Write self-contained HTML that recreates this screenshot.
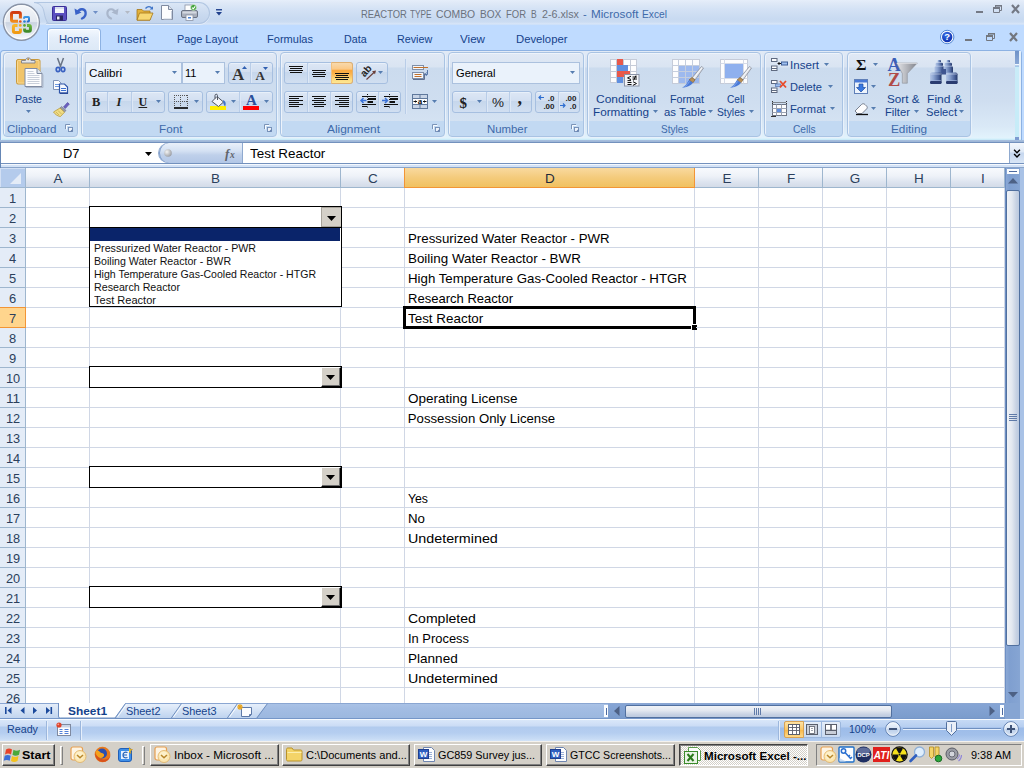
<!DOCTYPE html>
<html><head><meta charset="utf-8"><title>Microsoft Excel</title>
<style>
*{box-sizing:border-box;margin:0;padding:0}
html,body{width:1024px;height:768px;overflow:hidden;background:#bfdbff;font-family:"Liberation Sans",sans-serif;font-size:12px;color:#15428b}
body{position:relative}
div,span,i,b{position:absolute;display:block}
span{white-space:pre;font-style:normal}
i{font-style:normal}
svg{position:absolute;display:block;overflow:visible}
/* title */
#title{left:0;top:0;width:1024px;height:25px;background:linear-gradient(#e6eefa 0,#dfe9f7 3px,#d4e2f5 9px,#c8daf1 19px,#cbdcf2 22px,#d9e6f8 24px,#c4dcfa 25px)}
#qat{left:46px;top:2px;width:164px;height:22px;border-radius:0 11px 11px 0;background:linear-gradient(#dbe6f5,#c9d9ef 60%,#c2d4ec);border:1px solid #b1c6e2;border-left:none;box-shadow:0 1px 0 #e6eefa}
#tabs{left:0;top:25px;width:1024px;height:25px;background:#bfdbff}
#hometab{left:47px;top:28px;width:54px;height:23px;background:linear-gradient(#f3f8fe,#e4eefa 40%,#dce8f6);border:1px solid #8db2e3;border-bottom:none;border-radius:4px 4px 0 0;box-shadow:inset 1px 1px 0 #fff,inset -1px 0 0 #fff}
/* ribbon */
#ribbon{left:0;top:50px;width:1022px;height:90px;border:1px solid #8db2e3;border-bottom:none;border-radius:4px 4px 0 0;background:linear-gradient(#e1eaf6 0,#d8e3f2 16px,#c9d9ee 17px,#cfdef0 50px,#dae9f7 76px,#e2f3fc 87px,#d2f0fb 88px,#c4e6f6 89px,#b4d0ea 90px);box-shadow:inset 1px 0 0 #e4effb}
#ribbot{left:0;top:140px;width:1024px;height:2px;background:linear-gradient(#a9c0df,#9cb4d6)}
.grp{border:1px solid #a9c3e3;border-radius:4px;background:linear-gradient(#e0e9f5 0,#d9e4f2 14px,#cbdbee 15px,#cfdef0 50px,#d4e2f2 68px,#c2d9f2 68px,#c2d9f2 100%);box-shadow:inset 1px 1px 0 #edf3fb,1px 1px 0 #e8f1fb}
.bg{border:1px solid #a6bfe0;border-radius:3px;background:linear-gradient(#dde7f5 0,#d2dff1 45%,#c6d7ec 46%,#d1dff1 100%);box-shadow:inset 0 1px 0 #e8f0fa}
.sep{width:1px;background:#b9cde8;box-shadow:1px 0 0 #dde8f6}
.inp{border:1px solid #abc1de;background:#eaf2fb}
.on{background:linear-gradient(#f8d9ac 0,#fbc987 30%,#fba73c 38%,#fbb550 55%,#fdd87c 80%,#fee892 100%);border:1px solid #e0b070;border-left-color:#f0c080}
/* formula bar */
#fbar{left:0;top:142px;width:1024px;height:26px;background:#fff}
/* grid */
#grid{left:0;top:168px;width:1024px;height:535px;background:#fff;overflow:hidden}
.corner{left:0;top:0;width:26px;height:20px;background:#b4cbec;border-right:1px solid #9eb6ce;border-bottom:1px solid #9eb6ce;box-shadow:inset 1px 1px 0 #d3e0f4}
.corner i{right:4px;bottom:3px;width:0;height:0;border-left:11px solid transparent;border-bottom:11px solid #e4ecf7}
.ch{top:0;height:20px;background:linear-gradient(#f8fafd 0,#eef2f8 8px,#dde4ef 14px,#d3dbe8 19px);border-right:1px solid #9eb6ce;border-bottom:1px solid #9eb6ce}
.ch.sel{background:linear-gradient(#f9d99f,#f4cb7c 50%,#f1c15f);border-bottom:1px solid #f29536;border-right-color:#f29536;box-shadow:-1px 0 0 #f29536}
.rh{left:0;width:26px;height:20px;background:#e4ecf7;border-right:1px solid #9eb6ce;border-bottom:1px solid #9eb6ce}
.rh.sel{background:#ffd58d;border-right:1px solid #f29536;border-bottom-color:#f29536;box-shadow:0 -1px 0 #f29536}
.vl{top:20px;width:1px;height:515px;background:#d0d7e5}
.hl{left:26px;width:979px;height:1px;background:#d0d7e5}
.combo{left:89px;width:253px;height:22px;background:#fff;border:1px solid #000}
.cbtn{left:231px;top:0;width:20px;height:20px;background:#d4d0c8}
.cbtn.up{border-left:1px solid #fff;border-top:1px solid #fff;border-right:1px solid #000;border-bottom:1px solid #000;box-shadow:inset -1px -1px 0 #6a6a6a}
.cbtn.dn{border:1px solid #a8a49c;border-right:none}
.ddl{left:89px;top:59px;width:253px;height:80px;background:#fff;border:1px solid #000}
.ddl .hi{left:0;top:0;width:250px;height:13px;background:#0a246a}
/* bottom */
#sheetbar{left:0;top:703px;width:1024px;height:16px;background:linear-gradient(#a9c2e6 0,#a3bde3 4px,#9bb7df 15px);border-top:1px solid #8aa6d2;border-bottom:1px solid #7596c8}
#status{left:0;top:719px;width:1024px;height:22px;background:linear-gradient(#f6faff 0,#f6faff 1px,#d9e7f9 1px,#cbdcf5 7px,#b1cbee 8px,#b5cef0 14px,#c8dcf5 20px,#d2e3f8 22px)}
#taskbar{left:0;top:741px;width:1024px;height:27px;background:#d4d0c8;border-top:1px solid #f4f2ee}
.tb{top:744px;height:22px;background:#d4d0c8;border:1px solid;border-color:#fff #404040 #404040 #fff;box-shadow:inset -1px -1px 0 #808080}
.tb.dn{border-color:#404040 #fff #fff #404040;box-shadow:inset 1px 1px 0 #808080;background:#fff;background-image:repeating-conic-gradient(#d4d0c8 0 25%,#fff 0 50%);background-size:2px 2px}
.tsep{top:745px;width:2px;height:20px;border-left:1px solid #808080;border-right:1px solid #fff}
.tgrip{top:746px;width:3px;height:18px;border:1px solid;border-color:#fff #808080 #808080 #fff}

</style></head>
<body>

<div id="title"></div><div id="tabs"></div>
<div id="qat"></div>
<div style="left:360.6px;top:9px;height:12px;white-space:nowrap;font-size:0;line-height:0"><span style="position:relative;display:inline-block;width:49.2px;font-size:11.5px;line-height:11.5px;transform:scaleX(0.819);transform-origin:0 0;color:#6b727d;">REACTOR</span> <span style="position:relative;display:inline-block;width:26.6px;font-size:11.5px;line-height:11.5px;transform:scaleX(0.719);transform-origin:0 0;color:#6b727d;">TYPE</span> <span style="position:relative;display:inline-block;width:43.8px;font-size:11.5px;line-height:11.5px;transform:scaleX(0.902);transform-origin:0 0;color:#6b727d;">COMBO</span> <span style="position:relative;display:inline-block;width:25.8px;font-size:11.5px;line-height:11.5px;transform:scaleX(0.877);transform-origin:0 0;color:#6b727d;">BOX</span> <span style="position:relative;display:inline-block;width:25.0px;font-size:11.5px;line-height:11.5px;transform:scaleX(0.824);transform-origin:0 0;color:#6b727d;">FOR</span> <span style="position:relative;display:inline-block;width:10.7px;font-size:11.5px;line-height:11.5px;transform:scaleX(0.743);transform-origin:0 0;color:#6b727d;">B</span> <span style="position:relative;display:inline-block;width:41.6px;font-size:11.5px;line-height:11.5px;transform:scaleX(0.931);transform-origin:0 0;color:#6b727d;">2-6.xlsx</span> <span style="position:relative;display:inline-block;width:7.6px;font-size:11.5px;line-height:11.5px;transform:scaleX(0.963);transform-origin:0 0;color:#3e6aaa;">-</span> <span style="position:relative;display:inline-block;width:51.5px;font-size:11.5px;line-height:11.5px;transform:scaleX(1.018);transform-origin:0 0;color:#3e6aaa;">Microsoft</span> <span style="position:relative;display:inline-block;width:24.9px;font-size:11.5px;line-height:11.5px;transform:scaleX(0.885);transform-origin:0 0;color:#3e6aaa;">Excel</span></div>
<div id="hometab"></div>
<span style="left:59.0px;top:34px;font-size:11.5px;line-height:11.5px;transform:scaleX(0.978);transform-origin:0 0;color:#15428b;">Home</span>
<span style="left:117.0px;top:34px;font-size:11.5px;line-height:11.5px;transform:scaleX(1.008);transform-origin:0 0;color:#15428b;">Insert</span>
<span style="left:176.5px;top:34px;font-size:11.5px;line-height:11.5px;transform:scaleX(0.944);transform-origin:0 0;color:#15428b;">Page Layout</span>
<span style="left:266.6px;top:34px;font-size:11.5px;line-height:11.5px;transform:scaleX(0.960);transform-origin:0 0;color:#15428b;">Formulas</span>
<span style="left:343.7px;top:34px;font-size:11.5px;line-height:11.5px;transform:scaleX(0.930);transform-origin:0 0;color:#15428b;">Data</span>
<span style="left:396.8px;top:34px;font-size:11.5px;line-height:11.5px;transform:scaleX(0.933);transform-origin:0 0;color:#15428b;">Review</span>
<span style="left:460.0px;top:34px;font-size:11.5px;line-height:11.5px;transform:scaleX(1.011);transform-origin:0 0;color:#15428b;">View</span>
<span style="left:515.8px;top:34px;font-size:11.5px;line-height:11.5px;transform:scaleX(0.982);transform-origin:0 0;color:#15428b;">Developer</span>
<svg style="left:0;top:4px" width="1024" height="12" viewBox="0 0 1024 12"><rect x="976" y="7" width="7" height="2" fill="#747985"/><path d="M993.5 3.500h6v5h-6z M995.5 3v-1.500h6v5h-1.500" fill="none" stroke="#747985" stroke-width="1"/><rect x="993" y="3" width="7" height="2" fill="#747985"/><rect x="995" y="1" width="7" height="1.600" fill="#747985"/><path d="M1012 1l7 8M1019 1l-7 8" stroke="#747985" stroke-width="2.200" fill="none"/></svg>
<svg style="left:0;top:32px" width="1024" height="12" viewBox="0 0 1024 12"><rect x="965" y="7" width="7" height="2" fill="#73777f"/><path d="M986.5 3.500h6v5h-6z M988.5 3v-1.500h6v5h-1.500" fill="none" stroke="#73777f" stroke-width="1"/><rect x="986" y="3" width="7" height="2" fill="#73777f"/><rect x="988" y="1" width="7" height="1.600" fill="#73777f"/><path d="M1010 1l7 8M1017 1l-7 8" stroke="#73777f" stroke-width="2.200" fill="none"/></svg>
<svg style="left:940px;top:30px" width="15" height="15" viewBox="0 0 15 15"><defs><radialGradient id="hg" cx="40%" cy="30%" r="75%"><stop offset="0" stop-color="#3a72ea"/><stop offset="1" stop-color="#0a2aa8"/></radialGradient></defs><circle cx="7.200" cy="7" r="6.700" fill="#fff" stroke="#3f7ad0" stroke-width=".9"/><circle cx="7.200" cy="7" r="5.200" fill="url(#hg)"/><text x="7.200" y="10.300" font-family="Liberation Sans,sans-serif" font-size="9.500" font-weight="bold" fill="#fff" text-anchor="middle">?</text></svg>
<svg style="left:3px;top:3px" width="38" height="38" viewBox="0 0 38 38">
<defs><linearGradient id="ob" x1="0" y1="0" x2="0" y2="1"><stop offset="0" stop-color="#f6f8fb"/><stop offset=".5" stop-color="#e2e7ef"/><stop offset=".51" stop-color="#cbd3e0"/><stop offset=".8" stop-color="#e4e9f1"/><stop offset="1" stop-color="#fbfcfe"/></linearGradient>
<linearGradient id="lr" x1="0" y1="0" x2="0" y2="1"><stop offset="0" stop-color="#d03a12"/><stop offset="1" stop-color="#f08a1c"/></linearGradient>
<linearGradient id="ly" x1="0" y1="0" x2="0" y2="1"><stop offset="0" stop-color="#f9b82a"/><stop offset="1" stop-color="#f09a14"/></linearGradient>
<linearGradient id="lg" x1="0" y1="0" x2="0" y2="1"><stop offset="0" stop-color="#6ab43a"/><stop offset="1" stop-color="#3f8a2a"/></linearGradient>
<linearGradient id="lb" x1="0" y1="0" x2="0" y2="1"><stop offset="0" stop-color="#3a9ae8"/><stop offset="1" stop-color="#2a6ac8"/></linearGradient></defs>
<circle cx="18.400" cy="19.200" r="18" fill="url(#ob)" stroke="#8993a6" stroke-width="1.400"/>
<circle cx="18.400" cy="19.200" r="16.600" fill="none" stroke="#fff" stroke-width="1" opacity=".85"/>
<g fill="none" stroke-linejoin="round" stroke-linecap="butt">
<path d="M17.400 15.500v-4.600c0-1-.5-1.500-1.500-1.500h-5.900c-1 0-1.500.5-1.500 1.500v5.900c0 1 .5 1.500 1.500 1.500h5" stroke="url(#lr)" stroke-width="3"/>
<path d="M21.100 15.700v-1c0-.4.300-.7.700-.7h3.500c.4 0 .7.300.7.700v3.100c0 .4-.3.700-.7.700h-1.600" stroke="url(#lb)" stroke-width="2"/>
<path d="M14.500 22.500h-2.600c-1 0-1.500.5-1.500 1.500v4c0 1 .5 1.500 1.500 1.500h4c1 0 1.500-.5 1.500-1.500v-2.500" stroke="url(#ly)" stroke-width="3"/>
<path d="M24 22.500h1.900c1 0 1.500.5 1.500 1.500v2.800c0 1-.5 1.500-1.500 1.500h-2.800c-1 0-1.500-.5-1.500-1.500v-1.300" stroke="url(#lg)" stroke-width="3"/>
</g>
<circle cx="17.300" cy="18.500" r="1.350" fill="#e4521c"/><circle cx="21.500" cy="18.500" r="1.350" fill="#2f7fd8"/><circle cx="17.300" cy="22.400" r="1.350" fill="#f4a820"/><circle cx="21.500" cy="22.400" r="1.350" fill="#5aa832"/>
</svg>
<svg style="left:30px;top:0" width="20" height="26" viewBox="0 0 20 26"><defs><linearGradient id="qg" x1="0" y1="2" x2="0" y2="24" gradientUnits="userSpaceOnUse"><stop offset="0" stop-color="#dbe6f5"/><stop offset=".6" stop-color="#c9d9ef"/><stop offset="1" stop-color="#c2d4ec"/></linearGradient></defs><path d="M4 2.500c6 .500 9 4 10 9.500s2 8.500 4 11.500H16V2.500z" fill="url(#qg)"/><path d="M16 2.500H4c6 .500 9 4 10 9.500s2 9 4.500 11.500" fill="none" stroke="#b1c6e2" stroke-width="1"/></svg>
<svg style="left:52px;top:6px" width="15" height="15" viewBox="0 0 15 15"><rect x=".5" y=".5" width="14" height="14" rx="1" fill="#5a4fc0" stroke="#3a2f98"/><rect x="3" y="1" width="9" height="6" fill="#f4f6fb"/><rect x="3" y="1" width="9" height="2" fill="#d8def0"/><rect x="4" y="9.5" width="7" height="5" fill="#2a2660"/><rect x="5" y="10.5" width="2.5" height="3" fill="#e8eaf6"/></svg>
<svg style="left:74px;top:6px" width="14" height="14" viewBox="0 0 14 14"><path d="M3.5 6.5C5 2.5 10.5 2 11.5 6c.6 3-1.2 5.500-3.500 6.500" fill="none" stroke="#3a62c8" stroke-width="2.400" stroke-linecap="round"/><path d="M.5 2.500l1 6.500 6-2.500z" fill="#3a62c8"/></svg>
<svg style="left:93px;top:11px" width="5" height="3" viewBox="0 0 5 3"><path d="M0 0H5L2.5 3Z" fill="#6f8fc6"/></svg>
<svg style="left:105px;top:6px" width="14" height="14" viewBox="0 0 14 14"><path d="M10.500 6.500C9 2.500 3.500 2 2.500 6c-.6 3 1.200 5.500 3.500 6.500" fill="none" stroke="#a9b6cb" stroke-width="2.200" stroke-linecap="round"/><path d="M13.500 2.500l-1 6.500-6-2.500z" fill="#a9b6cb"/></svg>
<svg style="left:125px;top:11px" width="5" height="3" viewBox="0 0 5 3"><path d="M0 0H5L2.5 3Z" fill="#b3b9c4"/></svg>
<svg style="left:136px;top:5px" width="18" height="16" viewBox="0 0 18 16"><path d="M1 4.500h5l1.500 1.500h6.500v9h-13z" fill="#e3b23c" stroke="#a5761a" stroke-width=".8"/><path d="M3.500 8h13.500l-3 7.200h-13z" fill="#f7d873" stroke="#a5761a" stroke-width=".8"/><path d="M9.500 3.500c2-2.500 5-2.500 6.500 0" fill="none" stroke="#3f74c8" stroke-width="1.300"/><path d="M17 1.200v3.300h-3.300z" fill="#3f74c8"/></svg>
<svg style="left:161px;top:5px" width="12" height="15" viewBox="0 0 12 15"><path d="M.5.500h7l4 4v10h-11z" fill="#fdfdfe" stroke="#7f8aa0"/><path d="M7.500.500v4h4" fill="#dfe5ee" stroke="#7f8aa0"/><path d="M10.500 6v8h-8" fill="none" stroke="#c9d2e0"/></svg>
<svg style="left:181px;top:4px" width="17" height="17" viewBox="0 0 17 17"><rect x="4" y="1" width="8" height="6" fill="#fdfdfe" stroke="#8a93a6" stroke-width=".8"/><rect x=".5" y="6.500" width="16" height="7" rx="1.500" fill="#aab0bc" stroke="#6c7484"/><rect x="1.500" y="7.500" width="14" height="2" fill="#d4d8e0"/><rect x="5" y="11" width="7" height="5.500" fill="#fdfdfe" stroke="#8a93a6" stroke-width=".8"/><rect x="7" y="13" width="3" height="1.500" fill="#4a84d8"/><circle cx="12.500" cy="3.500" r="3" fill="#3fa23a" stroke="#e8f4e6" stroke-width=".6"/><path d="M11 3.500l1.200 1.300 2-2.500" stroke="#fff" stroke-width="1.100" fill="none"/></svg>
<svg style="left:215.500px;top:8.500px" width="6" height="7" viewBox="0 0 7 8"><rect x="0" y="0" width="7" height="1.600" fill="#1f3f8c"/><path d="M0 3.500h7l-3.500 4z" fill="#1f3f8c"/></svg>
<div id="ribbon"></div><div id="ribbot"></div>
<div style="left:1015px;top:51px;width:4px;height:89px;background:linear-gradient(#6f92c8 0,#8aa8d6 13px,#eef8ff 13px,#eef8ff 14px,#7fa3d8 15px,#c9ecf8 16px,#c6ecf8 100%)"></div>
<div style="left:1019px;top:51px;width:2px;height:88px;background:#e4f0fb"></div>
<div style="left:1015px;top:137px;width:4px;height:3px;background:#7c9bd0"></div>
<div class="grp" style="left:3px;top:52px;width:75px;height:85px;"></div>
<span style="left:7.0px;top:124px;font-size:11.5px;line-height:11.5px;transform:scaleX(1.005);transform-origin:0 0;color:#3e6aaa;">Clipboard</span>
<svg style="left:65px;top:124px" width="9" height="9" viewBox="0 0 9 9"><path d="M.5 5V.5H5" fill="none" stroke="#7b94b8"/><path d="M1.500 5.500V1.500H5.500" fill="none" stroke="#fff" opacity=".9"/><rect x="3.500" y="3.500" width="4" height="4" fill="#eef3fa" stroke="#6f8ab3" stroke-width=".9"/><path d="M5 7.500h2.500V5z" fill="#5f7daa"/></svg>
<svg style="left:16px;top:56px" width="28" height="32" viewBox="0 0 28 32">
<rect x=".500" y="3.500" width="23.500" height="24.500" rx="1.500" fill="#f1c469" stroke="#c9993c"/>
<rect x="1.500" y="4.500" width="21.500" height="22.500" rx="1" fill="none" stroke="#f8d993" stroke-width="1"/>
<path d="M5.500 7v-2.500h4c0-3.500 5.500-3.500 5.500 0h4V7z" fill="#e4e5e8" stroke="#7d7f88" stroke-width=".9"/>
<circle cx="12.200" cy="3.200" r="1" fill="#b98a3a"/>
<path d="M9 12.500h12l5 5v13h-17z" fill="#fdfdfe" stroke="#7f8ba2"/>
<path d="M21 12.500v5h5" fill="#dfe5ee" stroke="#7f8ba2"/>
<path d="M11.500 15.500h6M11.500 17.500h7M11.500 19.500h12M11.500 21.500h12M11.500 23.500h12M11.500 25.500h12M11.500 27.500h12" stroke="#c9cfda" stroke-width="1"/>
<path d="M10 31.500h17v-13" fill="none" stroke="#aeb9cb"/>
</svg>
<span style="left:15.0px;top:94px;font-size:11.5px;line-height:11.5px;transform:scaleX(0.918);transform-origin:0 0;color:#15428b;">Paste</span>
<svg style="left:26px;top:110px" width="5" height="3" viewBox="0 0 5 3"><path d="M0 0H5L2.5 3Z" fill="#567db0"/></svg>
<svg style="left:55px;top:58px" width="11" height="15" viewBox="0 0 11 15"><path d="M2.500 0l3.500 9.500M8.500 0l-3.500 9.500" stroke="#6a7484" stroke-width="1.500" fill="none"/><ellipse cx="3" cy="11.500" rx="1.800" ry="2.200" fill="#c9d8f4" stroke="#3a62c0" stroke-width="1.700"/><ellipse cx="8" cy="11.500" rx="1.800" ry="2.200" fill="#c9d8f4" stroke="#3a62c0" stroke-width="1.700"/></svg>
<svg style="left:53px;top:80px" width="16" height="14" viewBox="0 0 16 14"><path d="M.500 .500h5l2.500 2.500v6.500h-7.500z" fill="#fdfdfe" stroke="#7f93b8"/><path d="M2 4.500h4M2 6.500h4" stroke="#6f9ae0"/><path d="M6.500 4h5l3 3v6h-8z" fill="#f4f8fd" stroke="#2f55a8" stroke-width="1.200"/><path d="M8 8.500h5M8 10.500h5" stroke="#3a6fd0" stroke-width="1.200"/><path d="M7 13.300h8" stroke="#2a4a98" stroke-width="1.400"/></svg>
<svg style="left:53px;top:101px" width="17" height="16" viewBox="0 0 17 16"><path d="M10.500 6l4-4.500 1.800 1.600-4 4.500z" fill="#6a5fc0" stroke="#4a3f98" stroke-width=".6"/><path d="M8.500 5.500l4.500 4-1.500 1.500-4.500-4z" fill="#9a9ca8" stroke="#6c6f7c" stroke-width=".6"/><path d="M7 7l4.500 4.200-4 4.300c-2.500 0-5.500-2.200-7-4.500z" fill="#f0dc84" stroke="#b89a3c" stroke-width=".8"/><path d="M3 11l3 3M5 9.500l3.500 3.500" stroke="#c8ae50" stroke-width=".8"/></svg>
<div class="grp" style="left:81px;top:52px;width:196px;height:85px;"></div>
<span style="left:158.6px;top:124px;font-size:11.5px;line-height:11.5px;transform:scaleX(1.017);transform-origin:0 0;color:#3e6aaa;">Font</span>
<svg style="left:264px;top:124px" width="9" height="9" viewBox="0 0 9 9"><path d="M.5 5V.5H5" fill="none" stroke="#7b94b8"/><path d="M1.500 5.500V1.500H5.500" fill="none" stroke="#fff" opacity=".9"/><rect x="3.500" y="3.500" width="4" height="4" fill="#eef3fa" stroke="#6f8ab3" stroke-width=".9"/><path d="M5 7.500h2.500V5z" fill="#5f7daa"/></svg>
<div class="inp" style="left:85px;top:62px;width:97px;height:22px;"></div>
<span style="left:88.5px;top:68px;font-size:11.5px;line-height:11.5px;transform:scaleX(1.012);transform-origin:0 0;color:#000;">Calibri</span>
<svg style="left:172px;top:71px" width="5" height="3" viewBox="0 0 5 3"><path d="M0 0H5L2.5 3Z" fill="#567db0"/></svg>
<div class="inp" style="left:182px;top:62px;width:43px;height:22px;"></div>
<span style="left:185.0px;top:68px;font-size:11.5px;line-height:11.5px;transform:scaleX(0.962);transform-origin:0 0;color:#000;">11</span>
<svg style="left:215px;top:71px" width="5" height="3" viewBox="0 0 5 3"><path d="M0 0H5L2.5 3Z" fill="#567db0"/></svg>
<div class="bg" style="left:228px;top:62px;width:45px;height:22px;"></div>
<div class="sep" style="left:250px;top:63px;width:1px;height:20px;"></div>
<span style="left:232.0px;top:66px;font-size:17px;line-height:17px;color:#333;font-weight:bold;font-family:'Liberation Serif',serif;">A</span>
<span style="left:255.5px;top:69px;font-size:13px;line-height:13px;color:#333;font-weight:bold;font-family:'Liberation Serif',serif;">A</span>
<svg style="left:242px;top:66px" width="5" height="3" viewBox="0 0 5 3"><path d="M0 3h5L2.500 0z" fill="#2f5fb0"/></svg>
<svg style="left:263px;top:67px" width="5" height="3" viewBox="0 0 5 3"><path d="M0 0H5L2.5 3Z" fill="#2f5fb0"/></svg>
<div class="bg" style="left:85px;top:91px;width:80px;height:22px;"></div>
<div class="sep" style="left:107px;top:92px;width:1px;height:20px;"></div>
<div class="sep" style="left:131px;top:92px;width:1px;height:20px;"></div>
<span style="left:92.0px;top:96px;font-size:12.5px;line-height:12.5px;color:#222;font-weight:bold;font-family:'Liberation Serif',serif;">B</span>
<span style="left:116.5px;top:96px;font-size:12.5px;line-height:12.5px;color:#222;font-weight:bold;font-style:italic;font-family:'Liberation Serif',serif;">I</span>
<span style="left:138.5px;top:96px;font-size:12px;line-height:12px;color:#222;font-weight:bold;font-family:'Liberation Serif',serif;text-decoration:underline;">U</span>
<svg style="left:156px;top:100px" width="5" height="3" viewBox="0 0 5 3"><path d="M0 0H5L2.5 3Z" fill="#567db0"/></svg>
<div class="bg" style="left:168px;top:91px;width:35px;height:22px;"></div>
<svg style="left:174px;top:95px" width="14" height="14" viewBox="0 0 14 14"><path d="M0 .500h14M0 6.500h14M.500 0v12M6.500 0v12M13.500 0v12" stroke="#555" stroke-dasharray="1 1" fill="none"/><path d="M0 13h14" stroke="#000" stroke-width="1.600"/></svg>
<svg style="left:194px;top:100px" width="5" height="3" viewBox="0 0 5 3"><path d="M0 0H5L2.5 3Z" fill="#567db0"/></svg>
<div class="bg" style="left:206px;top:91px;width:67px;height:22px;"></div>
<div class="sep" style="left:239px;top:92px;width:1px;height:20px;"></div>
<svg style="left:210px;top:94px" width="17" height="16" viewBox="0 0 17 16"><rect x="0" y="12" width="16" height="4" fill="#ffef00"/><path d="M7 2.500l6.500 5.500-5 4.500L2 7.500z" fill="#f4f6fa" stroke="#4f5562" stroke-width="1"/><path d="M7.500 6V1.500c0-1.700-2.500-1.700-2.500 0v3" fill="none" stroke="#4f5562" stroke-width="1"/><path d="M13 6c2.500 1 3.500 3.500 2 6.500-1.200-1.500-2-3-2-6.500z" fill="#3f74c8"/></svg>
<svg style="left:231px;top:100px" width="5" height="3" viewBox="0 0 5 3"><path d="M0 0H5L2.5 3Z" fill="#567db0"/></svg>
<span style="left:246.0px;top:93px;font-size:15px;line-height:15px;color:#2a4f9a;font-weight:bold;font-family:'Liberation Serif',serif;">A</span>
<div style="left:243px;top:106px;width:16px;height:4px;background:#f00"></div>
<svg style="left:264px;top:100px" width="5" height="3" viewBox="0 0 5 3"><path d="M0 0H5L2.5 3Z" fill="#567db0"/></svg>
<div class="grp" style="left:280px;top:52px;width:165px;height:85px;"></div>
<span style="left:327.0px;top:124px;font-size:11.5px;line-height:11.5px;transform:scaleX(1.036);transform-origin:0 0;color:#3e6aaa;">Alignment</span>
<svg style="left:432px;top:124px" width="9" height="9" viewBox="0 0 9 9"><path d="M.5 5V.5H5" fill="none" stroke="#7b94b8"/><path d="M1.500 5.500V1.500H5.500" fill="none" stroke="#fff" opacity=".9"/><rect x="3.500" y="3.500" width="4" height="4" fill="#eef3fa" stroke="#6f8ab3" stroke-width=".9"/><path d="M5 7.500h2.500V5z" fill="#5f7daa"/></svg>
<div class="bg" style="left:284px;top:62px;width:69px;height:22px;"></div>
<div class="on" style="left:331px;top:62px;width:22px;height:22px;border-radius:0 3px 3px 0"></div>
<div class="sep" style="left:307px;top:63px;width:1px;height:20px;"></div>
<svg style="left:289px;top:66px" width="14" height="14" viewBox="0 0 14 14"><rect x="0" y="0" width="14" height="1" fill="#111"/><rect x="1" y="2" width="12" height="1" fill="#111"/><rect x="0" y="4" width="14" height="1" fill="#111"/><rect x="1" y="6" width="12" height="1" fill="#111"/></svg>
<svg style="left:312px;top:70px" width="14" height="14" viewBox="0 0 14 14"><rect x="0" y="0" width="14" height="1" fill="#111"/><rect x="1" y="2" width="12" height="1" fill="#111"/><rect x="0" y="4" width="14" height="1" fill="#111"/><rect x="1" y="6" width="12" height="1" fill="#111"/></svg>
<svg style="left:335px;top:73px" width="14" height="14" viewBox="0 0 14 14"><rect x="0" y="0" width="14" height="1" fill="#111"/><rect x="1" y="2" width="12" height="1" fill="#111"/><rect x="0" y="4" width="14" height="1" fill="#111"/><rect x="1" y="6" width="12" height="1" fill="#111"/></svg>
<div class="bg" style="left:356px;top:62px;width:32px;height:22px;"></div>
<svg style="left:360px;top:64px" width="18" height="18" viewBox="0 0 18 18"><text x="0" y="0" font-family="Liberation Sans,sans-serif" font-size="10" font-weight="bold" fill="#222" transform="translate(4.500 13.500) rotate(-48)">ab</text><path d="M6.500 15.500l8-7.500" stroke="#6a3f3a" stroke-width="1.100"/><path d="M16 6.500l-4 .800 3 3z" fill="#6a3f3a"/></svg>
<svg style="left:378px;top:71px" width="5" height="3" viewBox="0 0 5 3"><path d="M0 0H5L2.5 3Z" fill="#567db0"/></svg>
<div class="bg" style="left:284px;top:91px;width:69px;height:22px;"></div>
<div class="sep" style="left:307px;top:92px;width:1px;height:20px;"></div>
<div class="sep" style="left:330px;top:92px;width:1px;height:20px;"></div>
<svg style="left:289px;top:96px" width="14" height="14" viewBox="0 0 14 14"><rect x="0" y="0" width="14" height="1" fill="#111"/><rect x="0" y="2" width="10" height="1" fill="#111"/><rect x="0" y="4" width="14" height="1" fill="#111"/><rect x="0" y="6" width="10" height="1" fill="#111"/><rect x="0" y="8" width="14" height="1" fill="#111"/><rect x="0" y="10" width="10" height="1" fill="#111"/></svg>
<svg style="left:312px;top:96px" width="14" height="14" viewBox="0 0 14 14"><rect x="0" y="0" width="14" height="1" fill="#111"/><rect x="2" y="2" width="10" height="1" fill="#111"/><rect x="0" y="4" width="14" height="1" fill="#111"/><rect x="2" y="6" width="10" height="1" fill="#111"/><rect x="0" y="8" width="14" height="1" fill="#111"/><rect x="2" y="10" width="10" height="1" fill="#111"/></svg>
<svg style="left:335px;top:96px" width="14" height="14" viewBox="0 0 14 14"><rect x="0" y="0" width="14" height="1" fill="#111"/><rect x="4" y="2" width="10" height="1" fill="#111"/><rect x="0" y="4" width="14" height="1" fill="#111"/><rect x="4" y="6" width="10" height="1" fill="#111"/><rect x="0" y="8" width="14" height="1" fill="#111"/><rect x="4" y="10" width="10" height="1" fill="#111"/></svg>
<div class="bg" style="left:356px;top:91px;width:45px;height:22px;"></div>
<div class="sep" style="left:378px;top:92px;width:1px;height:20px;"></div>
<svg style="left:360px;top:94px" width="17" height="15" viewBox="0 0 17 15"><path d="M7.500 0v15" stroke="#111" stroke-dasharray="1 1.500"/><rect x="2" y="2" width="14" height="1" fill="#111"/><rect x="8" y="4" width="8" height="2" fill="#111"/><rect x="8" y="7" width="5" height="2" fill="#111"/><rect x="2" y="10" width="14" height="1" fill="#111"/><rect x="2" y="12" width="5" height="1" fill="#111"/><path d="M6.500 6.500H1M3.500 4L1 6.500 3.500 9" stroke="#3a72d8" stroke-width="1.500" fill="none"/></svg>
<svg style="left:382px;top:94px" width="17" height="15" viewBox="0 0 17 15"><path d="M7.500 0v15" stroke="#111" stroke-dasharray="1 1.500"/><rect x="2" y="2" width="14" height="1" fill="#111"/><rect x="8" y="4" width="8" height="2" fill="#111"/><rect x="8" y="7" width="5" height="2" fill="#111"/><rect x="2" y="10" width="14" height="1" fill="#111"/><rect x="2" y="12" width="5" height="1" fill="#111"/><path d="M0 6.500h5.500M3 4L5.500 6.500 3 9" stroke="#3a72d8" stroke-width="1.500" fill="none"/></svg>
<div class="sep" style="left:405px;top:59px;width:1px;height:55px;"></div>
<svg style="left:412px;top:65px" width="17" height="15" viewBox="0 0 17 15"><rect x=".500" y=".500" width="11" height="4" fill="#f4f7fb" stroke="#7f8fa8"/><path d="M1.500 2.500H16" stroke="#c0702c" stroke-width="1"/><rect x=".500" y="7.500" width="11" height="6" fill="#f4f7fb" stroke="#7f8fa8"/><path d="M1 14.500h11.500v-6" fill="none" stroke="#5f7090" stroke-width="1"/><path d="M2.500 9.500h7M2.500 11.500h7" stroke="#c0702c"/><path d="M15.500 5v4.500h-2.500M14.500 7.500L13 9.500 15 10.500" stroke="#5878a8" fill="none"/></svg>
<svg style="left:412px;top:94px" width="16" height="15" viewBox="0 0 16 15"><rect x=".500" y=".500" width="15" height="14" fill="#fdfdfe" stroke="#5f789c"/><rect x="1" y="1" width="14" height="3" fill="#c8d4e6"/><rect x="1" y="11" width="14" height="3" fill="#c8d4e6"/><path d="M.500 4.500h15M.500 10.500h15M8 .500v4M8 10.500v4" stroke="#5f789c"/><text x="8" y="10.300" font-family="Liberation Serif,serif" font-weight="bold" font-size="9" text-anchor="middle" fill="#111">a</text><path d="M1.500 7.500h3.500M11 7.500h3.500M3.500 6.500v2M12.500 6.500v2" stroke="#111"/></svg>
<svg style="left:432px;top:100px" width="5" height="3" viewBox="0 0 5 3"><path d="M0 0H5L2.5 3Z" fill="#567db0"/></svg>
<div class="grp" style="left:448px;top:52px;width:136px;height:85px;"></div>
<span style="left:486.6px;top:124px;font-size:11.5px;line-height:11.5px;transform:scaleX(0.990);transform-origin:0 0;color:#3e6aaa;">Number</span>
<svg style="left:571px;top:124px" width="9" height="9" viewBox="0 0 9 9"><path d="M.5 5V.5H5" fill="none" stroke="#7b94b8"/><path d="M1.500 5.500V1.500H5.500" fill="none" stroke="#fff" opacity=".9"/><rect x="3.500" y="3.500" width="4" height="4" fill="#eef3fa" stroke="#6f8ab3" stroke-width=".9"/><path d="M5 7.500h2.500V5z" fill="#5f7daa"/></svg>
<div class="inp" style="left:452px;top:62px;width:128px;height:22px;"></div>
<span style="left:455.5px;top:68px;font-size:11.5px;line-height:11.5px;transform:scaleX(0.965);transform-origin:0 0;color:#000;">General</span>
<svg style="left:570px;top:71px" width="5" height="3" viewBox="0 0 5 3"><path d="M0 0H5L2.5 3Z" fill="#567db0"/></svg>
<div class="bg" style="left:452px;top:91px;width:80px;height:22px;"></div>
<div class="sep" style="left:486px;top:92px;width:1px;height:20px;"></div>
<div class="sep" style="left:509px;top:92px;width:1px;height:20px;"></div>
<span style="left:459.5px;top:96px;font-size:15px;line-height:15px;color:#222;font-weight:bold;font-family:'Liberation Serif',serif;">$</span>
<svg style="left:477px;top:100px" width="5" height="3" viewBox="0 0 5 3"><path d="M0 0H5L2.5 3Z" fill="#567db0"/></svg>
<span style="left:491.5px;top:96px;font-size:13px;line-height:13px;transform:scaleX(1.038);transform-origin:0 0;color:#222;">%</span>
<span style="left:517.5px;top:89px;font-size:18px;line-height:18px;color:#222;font-weight:bold;font-family:'Liberation Serif',serif;">,</span>
<div class="bg" style="left:535px;top:91px;width:45px;height:22px;"></div>
<div class="sep" style="left:558px;top:92px;width:1px;height:20px;"></div>
<svg style="left:538px;top:94px" width="17" height="16" viewBox="0 0 17 16"><text x="16.500" y="7" font-family="Liberation Sans,sans-serif" font-weight="bold" font-size="8" text-anchor="end" fill="#222">.0</text><text x="16.500" y="14.500" font-family="Liberation Sans,sans-serif" font-weight="bold" font-size="8" text-anchor="end" fill="#222">.00</text><path d="M6 3.500H1M3 1.500L1 3.500 3 5.500" stroke="#2f6fd0" stroke-width="1.200" fill="none"/></svg>
<svg style="left:560px;top:94px" width="17" height="16" viewBox="0 0 17 16"><text x="16.500" y="7" font-family="Liberation Sans,sans-serif" font-weight="bold" font-size="8" text-anchor="end" fill="#222">.00</text><text x="16.500" y="14.500" font-family="Liberation Sans,sans-serif" font-weight="bold" font-size="8" text-anchor="end" fill="#222">.0</text><path d="M0 11.500h5M3 9.500L5 11.500 3 13.500" stroke="#2f6fd0" stroke-width="1.200" fill="none"/></svg>
<div class="grp" style="left:587px;top:52px;width:174px;height:85px;"></div>
<span style="left:660.7px;top:124px;font-size:11.5px;line-height:11.5px;transform:scaleX(0.871);transform-origin:0 0;color:#3e6aaa;">Styles</span>
<svg style="left:610px;top:59px" width="30" height="28" viewBox="0 0 30 28">
<rect x=".500" y=".500" width="26" height="23" fill="#fdfdfe" stroke="#c5cbd8"/>
<path d="M.500 6.500h26M.500 12.500h26M.500 18.500h26M6.500 .500v23M13.500 .500v23M20.500 .500v23" stroke="#c5cbd8"/>
<rect x="7" y="0" width="6" height="6" fill="#e8584a"/><rect x="7" y="6" width="11" height="6" fill="#5f8fe0"/><rect x="7" y="12" width="13" height="6" fill="#e8584a"/><rect x="7" y="18" width="6" height="6" fill="#5f8fe0"/>
<rect x="14.500" y="15.500" width="14.500" height="11.500" fill="#f3f5f9" stroke="#8a93a6"/>
<path d="M21 17.200l-3.500 1.700 3.500 1.700M17.500 21.600h3.500" fill="none" stroke="#111" stroke-width="1"/>
<path d="M22.500 18h4.500M22.500 20h4.500M26 16.500l-2.500 5" fill="none" stroke="#111" stroke-width="1"/>
<path d="M17.500 23.500h4M17.500 25.500h4" fill="none" stroke="#111" stroke-width="1"/>
<path d="M23 22.700l3.500 1.800-3.500 1.800" fill="none" stroke="#111" stroke-width="1"/>
</svg>
<span style="left:595.8px;top:94px;font-size:11.5px;line-height:11.5px;transform:scaleX(1.043);transform-origin:0 0;color:#15428b;">Conditional</span>
<span style="left:593.4px;top:107px;font-size:11.5px;line-height:11.5px;transform:scaleX(1.019);transform-origin:0 0;color:#15428b;">Formatting</span>
<svg style="left:653px;top:110px" width="5" height="3" viewBox="0 0 5 3"><path d="M0 0H5L2.5 3Z" fill="#567db0"/></svg>
<svg style="left:672px;top:59px" width="28" height="25" viewBox="0 0 28 25"><rect x=".500" y=".500" width="27" height="24" fill="#fdfdfe" stroke="#c5cbd8"/><rect x="7" y="6" width="20" height="18" fill="#9db9ee"/><path d="M.500 6.500h27M.500 12.500h27M.500 18.500h27M6.500 .500v24M13.500 .500v24M20.500 .500v24" stroke="#c5cede"/></svg>
<svg style="left:682px;top:66px" width="22" height="22" viewBox="0 0 22 22"><path d="M19.500 .500l2 1.500-8.500 12-3-2.200z" fill="#dfe2e8" stroke="#8a8f9c" stroke-width=".8"/><path d="M20 1.500l-8.500 11" stroke="#fff" stroke-width=".8"/><path d="M10 11.500l3 2.300-2 3-4-2.800z" fill="#b8905a" stroke="#7a5a2a" stroke-width=".6"/><path d="M7 14l4 2.800c-2 3-6.500 4.500-11 5 3.500-2 5-4.500 7-7.800z" fill="#4a7ad8"/><path d="M7.500 15.500c-1.500 2.500-3 4-5 5.500" stroke="#8fb0f0" stroke-width=".8" fill="none"/></svg>
<span style="left:670.0px;top:94px;font-size:11.5px;line-height:11.5px;transform:scaleX(0.934);transform-origin:0 0;color:#15428b;">Format</span>
<span style="left:663.5px;top:107px;font-size:11.5px;line-height:11.5px;transform:scaleX(0.985);transform-origin:0 0;color:#15428b;">as Table</span>
<svg style="left:708px;top:110px" width="5" height="3" viewBox="0 0 5 3"><path d="M0 0H5L2.5 3Z" fill="#567db0"/></svg>
<svg style="left:720px;top:59px" width="28" height="25" viewBox="0 0 28 25"><rect x=".500" y=".500" width="27" height="24" fill="#fdfdfe" stroke="#c5cbd8"/><path d="M.500 4.500h27M.500 19.500h27M4.500 .500v24M23.500 .500v24" stroke="#d5dbe8"/><rect x="5" y="5" width="18" height="14" fill="#8fb0ee"/></svg>
<svg style="left:730px;top:66px" width="22" height="22" viewBox="0 0 22 22"><path d="M19.500 .500l2 1.500-8.500 12-3-2.200z" fill="#dfe2e8" stroke="#8a8f9c" stroke-width=".8"/><path d="M20 1.500l-8.500 11" stroke="#fff" stroke-width=".8"/><path d="M10 11.500l3 2.300-2 3-4-2.800z" fill="#b8905a" stroke="#7a5a2a" stroke-width=".6"/><path d="M7 14l4 2.800c-2 3-6.500 4.500-11 5 3.500-2 5-4.500 7-7.800z" fill="#4a7ad8"/><path d="M7.500 15.500c-1.500 2.500-3 4-5 5.500" stroke="#8fb0f0" stroke-width=".8" fill="none"/></svg>
<span style="left:726.6px;top:94px;font-size:11.5px;line-height:11.5px;transform:scaleX(0.883);transform-origin:0 0;color:#15428b;">Cell</span>
<span style="left:717.3px;top:107px;font-size:11.5px;line-height:11.5px;transform:scaleX(0.894);transform-origin:0 0;color:#15428b;">Styles</span>
<svg style="left:749px;top:110px" width="5" height="3" viewBox="0 0 5 3"><path d="M0 0H5L2.5 3Z" fill="#567db0"/></svg>
<div class="grp" style="left:764px;top:52px;width:79px;height:85px;"></div>
<span style="left:792.8px;top:124px;font-size:11.5px;line-height:11.5px;transform:scaleX(0.888);transform-origin:0 0;color:#3e6aaa;">Cells</span>
<svg style="left:771px;top:58px" width="17" height="14" viewBox="0 0 17 14"><rect x=".500" y=".500" width="5.500" height="3" fill="#fdfdfe" stroke="#5f6a80"/><rect x=".500" y="8" width="5.500" height="4.500" fill="#fdfdfe" stroke="#5f6a80"/><path d="M.500 10.500h5.500" stroke="#5f6a80"/><rect x="10.500" y="4" width="6" height="3" fill="#9fc0f0" stroke="#3f5f98"/><path d="M10 5.500H7M8.500 4L7 5.500 8.500 7" stroke="#111" fill="none"/></svg>
<span style="left:790.0px;top:60px;font-size:11.5px;line-height:11.5px;transform:scaleX(1.008);transform-origin:0 0;color:#15428b;">Insert</span>
<svg style="left:824px;top:63px" width="5" height="3" viewBox="0 0 5 3"><path d="M0 0H5L2.5 3Z" fill="#567db0"/></svg>
<svg style="left:771px;top:80px" width="17" height="14" viewBox="0 0 17 14"><rect x=".500" y=".500" width="5.500" height="3" fill="#fdfdfe" stroke="#5f6a80"/><rect x=".500" y="8" width="5.500" height="4.500" fill="#fdfdfe" stroke="#5f6a80"/><path d="M.500 10.500h5.500" stroke="#5f6a80"/><rect x="4.500" y="4" width="5" height="2.500" fill="#9fc0f0" stroke="#5f7fb8" stroke-width=".8"/><path d="M9 1l6 6.500M15 1l-6 6.500" stroke="#e84a2a" stroke-width="1.800"/></svg>
<span style="left:790.0px;top:82px;font-size:11.5px;line-height:11.5px;transform:scaleX(0.962);transform-origin:0 0;color:#15428b;">Delete</span>
<svg style="left:828px;top:85px" width="5" height="3" viewBox="0 0 5 3"><path d="M0 0H5L2.5 3Z" fill="#567db0"/></svg>
<svg style="left:771px;top:101px" width="17" height="16" viewBox="0 0 17 16"><rect x="1.500" y="3.500" width="14" height="11" fill="#fdfdfe" stroke="#6c7484"/><path d="M1.500 7.500h14M1.500 11.500h14M5.500 3.500v11M10.500 3.500v11" stroke="#9aa3b4"/><rect x="6" y="8" width="4" height="3" fill="#5f8fe0"/><path d="M1.500 0v3M15.500 0v3M1.500 1.500h14" stroke="#333" stroke-dasharray="1 1"/><path d="M0 15.500h5" stroke="#333"/></svg>
<span style="left:790.0px;top:104px;font-size:11.5px;line-height:11.5px;transform:scaleX(0.975);transform-origin:0 0;color:#15428b;">Format</span>
<svg style="left:830px;top:107px" width="5" height="3" viewBox="0 0 5 3"><path d="M0 0H5L2.5 3Z" fill="#567db0"/></svg>
<div class="grp" style="left:847px;top:52px;width:124px;height:85px;"></div>
<span style="left:890.5px;top:124px;font-size:11.5px;line-height:11.5px;transform:scaleX(1.024);transform-origin:0 0;color:#3e6aaa;">Editing</span>
<span style="left:855.5px;top:59px;font-size:14px;line-height:14px;transform:scaleX(1.147);transform-origin:0 0;color:#111;font-weight:bold;font-family:'Liberation Serif',serif;">Σ</span>
<svg style="left:873px;top:63px" width="5" height="3" viewBox="0 0 5 3"><path d="M0 0H5L2.5 3Z" fill="#567db0"/></svg>
<svg style="left:854px;top:79px" width="14" height="15" viewBox="0 0 14 15"><rect x=".500" y=".500" width="13" height="14" fill="#eef4fc" stroke="#5f7fb8"/><rect x="1" y="1" width="12" height="2.500" fill="#4a7ad8"/><path d="M5 5h4v3.500h2.500L7 13 2.500 8.500H5z" fill="#3a78e0" stroke="#1f4fa0" stroke-width=".7"/></svg>
<svg style="left:871px;top:85px" width="5" height="3" viewBox="0 0 5 3"><path d="M0 0H5L2.5 3Z" fill="#567db0"/></svg>
<svg style="left:854px;top:103px" width="15" height="12" viewBox="0 0 15 12"><path d="M1 8l6.500-6.500c1-1 2.500-1 3.500 0l1.500 1.500c1 1 1 2 0 3L8 10.500H3.500z" fill="#fdfdfe" stroke="#6c7484" stroke-width=".9"/><path d="M2 11.500h12" stroke="#111" stroke-width="1.300"/></svg>
<svg style="left:871px;top:107px" width="5" height="3" viewBox="0 0 5 3"><path d="M0 0H5L2.5 3Z" fill="#567db0"/></svg>
<svg style="left:888px;top:58px" width="30" height="29" viewBox="0 0 30 29"><defs><linearGradient id="fn" x1="0" y1="0" x2="1" y2="0"><stop offset="0" stop-color="#e4e5e8"/><stop offset=".5" stop-color="#b4b6bc"/><stop offset="1" stop-color="#7f828a"/></linearGradient></defs>
<text x="-.500" y="12.700" font-family="Liberation Serif,serif" font-weight="bold" font-size="18.500" fill="#3a5fb8">A</text><text x="0" y="27.800" font-family="Liberation Serif,serif" font-weight="bold" font-size="18.500" fill="#b04a48">Z</text>
<path d="M8.500 5h20.800l-10 10.500v9.700h-5v-9.700z" fill="url(#fn)" stroke="#8a8d96" stroke-width=".6"/><path d="M9 5.300h20" stroke="#f0f0f2" stroke-width=".8"/></svg>
<span style="left:886.5px;top:94px;font-size:11.5px;line-height:11.5px;transform:scaleX(1.017);transform-origin:0 0;color:#15428b;">Sort &amp;</span>
<span style="left:885.0px;top:107px;font-size:11.5px;line-height:11.5px;transform:scaleX(0.978);transform-origin:0 0;color:#15428b;">Filter</span>
<svg style="left:914px;top:110px" width="5" height="3" viewBox="0 0 5 3"><path d="M0 0H5L2.5 3Z" fill="#567db0"/></svg>
<svg style="left:930px;top:60px" width="28" height="25" viewBox="0 0 28 25"><defs><linearGradient id="bn" x1="0" y1="0" x2="1" y2="0"><stop offset="0" stop-color="#b4c6e6"/><stop offset=".3" stop-color="#8ea6d2"/><stop offset=".75" stop-color="#4a629a"/><stop offset="1" stop-color="#223668"/></linearGradient></defs>
<rect x="7.500" y="0" width="3.500" height="3" rx="1" fill="url(#bn)"/><rect x="16.500" y="0" width="3.500" height="3" rx="1" fill="url(#bn)"/>
<rect x="5.500" y="2.500" width="7.500" height="4" rx="1.500" fill="url(#bn)"/><rect x="14.500" y="2.500" width="7.500" height="4" rx="1.500" fill="url(#bn)"/>
<rect x="4.500" y="6" width="9.500" height="7.500" rx="1.500" fill="url(#bn)"/><rect x="13.500" y="6" width="9.500" height="7.500" rx="1.500" fill="url(#bn)"/>
<rect x="11.500" y="9" width="4.500" height="5.500" fill="#3f5590"/>
<rect x="0" y="12.500" width="11.500" height="11.500" rx="1.800" fill="url(#bn)"/><rect x="16" y="12.500" width="11.500" height="11.500" rx="1.800" fill="url(#bn)"/>
<path d="M.500 14h10.500M16.500 14h10.500" stroke="#d4e0f4" stroke-width=".8" opacity=".8"/>
<rect x="0" y="21" width="11.500" height="3" rx="1.200" fill="#2a3c70"/><rect x="16" y="21" width="11.500" height="3" rx="1.200" fill="#2a3c70"/>
<path d="M.800 20.500h10M16.800 20.500h10" stroke="#9fb4dc" stroke-width=".8" opacity=".9"/>
<path d="M6 2.500h6.500M15 2.500h6.500M5 6.200h8.500M14 6.200h8.500" stroke="#d4e0f4" stroke-width=".7" opacity=".8"/>
</svg>
<span style="left:927.0px;top:94px;font-size:11.5px;line-height:11.5px;transform:scaleX(1.053);transform-origin:0 0;color:#15428b;">Find &amp;</span>
<span style="left:926.0px;top:107px;font-size:11.5px;line-height:11.5px;transform:scaleX(0.970);transform-origin:0 0;color:#15428b;">Select</span>
<svg style="left:959px;top:110px" width="5" height="3" viewBox="0 0 5 3"><path d="M0 0H5L2.5 3Z" fill="#567db0"/></svg>
<div id="fbar"><div style="left:0px;top:0px;width:1024px;height:1px;background:#7391bd"></div><div style="left:0px;top:21px;width:1024px;height:1px;background:#7391bd"></div><div style="left:0px;top:22px;width:1024px;height:1px;background:#f4f8fd"></div><div style="left:0px;top:23px;width:1024px;height:2px;background:#d3e2f6"></div><div style="left:0px;top:25px;width:1024px;height:1px;background:#8aa5cb"></div><div style="left:0px;top:0px;width:1px;height:26px;background:#6586b5"></div><div style="left:158px;top:1px;width:85px;height:20px;background:#fff"></div><div style="left:158px;top:1px;width:85px;height:20px;border-radius:10px 0 0 10px;background:linear-gradient(#e9f0fa 0,#d4e1f3 8px,#bfd0ea 12px,#b3c7e6 20px);border:1px solid #8fa9cf;border-right:1px solid #8fa9cf;border-top:none;border-bottom:none;box-shadow:inset 1px 0 0 #7f9cc8"></div><svg style="left:164px;top:7px" width="8" height="8" viewBox="0 0 8 8"><defs><radialGradient id="fc" cx="35%" cy="35%" r="70%"><stop offset="0" stop-color="#f4f4f4"/><stop offset="1" stop-color="#9a9da3"/></radialGradient></defs><circle cx="4" cy="4" r="3.800" fill="url(#fc)"/></svg><div style="left:1009px;top:1px;width:15px;height:20px;background:linear-gradient(#f4f8fd,#dfe9f6 45%,#c5d6ee 50%,#d9e6f6);border-left:1px solid #8fa9cf"></div><svg style="left:1012.500px;top:6.500px" width="8" height="10" viewBox="0 0 9 12"><path d="M1 1l3.500 3.500L8 1M1 6l3.500 3.500L8 6" fill="none" stroke="#000" stroke-width="1.700"/></svg></div>
<span style="left:62.5px;top:147px;font-size:13px;line-height:13px;transform:scaleX(0.992);transform-origin:0 0;color:#000;">D7</span>
<svg style="left:144.5px;top:152px" width="7" height="4" viewBox="0 0 7 4"><path d="M0 0H7L3.5 4Z" fill="#000"/></svg>
<span style="left:225.0px;top:147px;font-size:13px;line-height:13px;color:#5f636b;font-weight:bold;font-style:italic;font-family:'Liberation Serif',serif;">f</span>
<span style="left:230.0px;top:151px;font-size:9.5px;line-height:9.5px;color:#5f636b;font-weight:bold;font-style:italic;font-family:'Liberation Serif',serif;">x</span>
<span style="left:250.3px;top:147px;font-size:13px;line-height:13px;transform:scaleX(1.032);transform-origin:0 0;color:#000;">Test Reactor</span>
<div id="grid">
<div class="corner"><i></i></div>
<div class="ch" style="left:26px;width:64px"></div>
<div class="ch" style="left:90px;width:251px"></div>
<div class="ch" style="left:341px;width:64px"></div>
<div class="ch sel" style="left:405px;width:290px"></div>
<div class="ch" style="left:695px;width:64px"></div>
<div class="ch" style="left:759px;width:64px"></div>
<div class="ch" style="left:823px;width:64px"></div>
<div class="ch" style="left:887px;width:64px"></div>
<div class="ch" style="left:951px;width:54px"></div>
<div class="rh" style="top:20px"></div>
<div class="rh" style="top:40px"></div>
<div class="rh" style="top:60px"></div>
<div class="rh" style="top:80px"></div>
<div class="rh" style="top:100px"></div>
<div class="rh" style="top:120px"></div>
<div class="rh sel" style="top:140px"></div>
<div class="rh" style="top:160px"></div>
<div class="rh" style="top:180px"></div>
<div class="rh" style="top:200px"></div>
<div class="rh" style="top:220px"></div>
<div class="rh" style="top:240px"></div>
<div class="rh" style="top:260px"></div>
<div class="rh" style="top:280px"></div>
<div class="rh" style="top:300px"></div>
<div class="rh" style="top:320px"></div>
<div class="rh" style="top:340px"></div>
<div class="rh" style="top:360px"></div>
<div class="rh" style="top:380px"></div>
<div class="rh" style="top:400px"></div>
<div class="rh" style="top:420px"></div>
<div class="rh" style="top:440px"></div>
<div class="rh" style="top:460px"></div>
<div class="rh" style="top:480px"></div>
<div class="rh" style="top:500px"></div>
<div class="rh" style="top:520px"></div>
<div class="rh" style="top:540px"></div>
<div class="vl" style="left:89px"></div>
<div class="vl" style="left:340px"></div>
<div class="vl" style="left:404px"></div>
<div class="vl" style="left:694px"></div>
<div class="vl" style="left:758px"></div>
<div class="vl" style="left:822px"></div>
<div class="vl" style="left:886px"></div>
<div class="vl" style="left:950px"></div>
<div class="vl" style="left:1004px"></div>
<div class="hl" style="top:39px"></div>
<div class="hl" style="top:59px"></div>
<div class="hl" style="top:79px"></div>
<div class="hl" style="top:99px"></div>
<div class="hl" style="top:119px"></div>
<div class="hl" style="top:139px"></div>
<div class="hl" style="top:159px"></div>
<div class="hl" style="top:179px"></div>
<div class="hl" style="top:199px"></div>
<div class="hl" style="top:219px"></div>
<div class="hl" style="top:239px"></div>
<div class="hl" style="top:259px"></div>
<div class="hl" style="top:279px"></div>
<div class="hl" style="top:299px"></div>
<div class="hl" style="top:319px"></div>
<div class="hl" style="top:339px"></div>
<div class="hl" style="top:359px"></div>
<div class="hl" style="top:379px"></div>
<div class="hl" style="top:399px"></div>
<div class="hl" style="top:419px"></div>
<div class="hl" style="top:439px"></div>
<div class="hl" style="top:459px"></div>
<div class="hl" style="top:479px"></div>
<div class="hl" style="top:499px"></div>
<div class="hl" style="top:519px"></div>
<div class="hl" style="top:539px"></div>
<div class="hl" style="top:559px"></div>
<div style="left:403px;top:138px;width:293px;height:23px;border:3px solid #000"></div>
<div style="left:691px;top:156px;width:6px;height:6px;background:#fff"></div>
<div style="left:692px;top:157px;width:5px;height:5px;background:#000"></div>
<div style="left:696px;top:159px;width:1px;height:1px;background:#d0d7e5"></div>
<div class="combo" style="top:38px"><div class="cbtn dn"><svg style="left:5px;top:8px" width="9" height="5" viewBox="0 0 9 5"><path d="M0 0h9L4.500 5z" fill="#000"/></svg></div></div>
<div class="combo" style="top:198px"><div class="cbtn up"><svg style="left:4px;top:7px" width="9" height="5" viewBox="0 0 9 5"><path d="M0 0h9L4.500 5z" fill="#000"/></svg></div></div>
<div class="combo" style="top:298px"><div class="cbtn up"><svg style="left:4px;top:7px" width="9" height="5" viewBox="0 0 9 5"><path d="M0 0h9L4.500 5z" fill="#000"/></svg></div></div>
<div class="combo" style="top:418px"><div class="cbtn up"><svg style="left:4px;top:7px" width="9" height="5" viewBox="0 0 9 5"><path d="M0 0h9L4.500 5z" fill="#000"/></svg></div></div>
<div class="ddl"><div class="hi"></div></div>
<div style="left:1005px;top:0px;width:15px;height:535px;background:linear-gradient(90deg,#8daad6,#7f9fd0 30%,#86a5d3)"></div>
<div style="left:1020px;top:0px;width:4px;height:535px;background:#a9c2e6"></div>
<div style="left:1005px;top:0px;width:1px;height:535px;background:#6d8fc4"></div>
<div style="left:1007px;top:1px;width:12px;height:5px;background:#fbfdff"></div>
<div style="left:1009px;top:3px;width:8px;height:1px;background:#4d6aa0"></div>
<svg style="left:1008px;top:10px" width="10" height="6" viewBox="0 0 10 6"><path d="M0 5.500h10L5 0z" fill="#4d6185"/></svg>
<div style="left:1006px;top:22px;width:14px;height:456px;border:1px solid #51709f;border-radius:2px;background:linear-gradient(90deg,#f0f3f8 0,#e3e8f0 40%,#c5d0e2 80%,#bccae0)"></div>
<svg style="left:1009px;top:246px" width="8" height="8" viewBox="0 0 8 8"><path d="M0 .500h8M0 2.500h8M0 4.500h8M0 6.500h8" stroke="#5f7aa8"/></svg>
<svg style="left:1008px;top:524px" width="10" height="6" viewBox="0 0 10 6"><path d="M0 0h10L5 5.500z" fill="#4d6185"/></svg>
</div>
<span style="left:53.5px;top:172px;font-size:13.5px;line-height:13.5px;color:#2b3f5c;">A</span>
<span style="left:211.0px;top:172px;font-size:13.5px;line-height:13.5px;color:#2b3f5c;">B</span>
<span style="left:368.1px;top:172px;font-size:13.5px;line-height:13.5px;color:#2b3f5c;">C</span>
<span style="left:545.1px;top:172px;font-size:13.5px;line-height:13.5px;color:#1f2a3a;">D</span>
<span style="left:722.5px;top:172px;font-size:13.5px;line-height:13.5px;color:#2b3f5c;">E</span>
<span style="left:786.9px;top:172px;font-size:13.5px;line-height:13.5px;color:#2b3f5c;">F</span>
<span style="left:849.7px;top:172px;font-size:13.5px;line-height:13.5px;color:#2b3f5c;">G</span>
<span style="left:914.1px;top:172px;font-size:13.5px;line-height:13.5px;color:#2b3f5c;">H</span>
<span style="left:981.1px;top:172px;font-size:13.5px;line-height:13.5px;color:#2b3f5c;">I</span>
<span style="left:9.4px;top:192px;font-size:13.5px;line-height:13.5px;transform:scaleX(0.958);transform-origin:0 0;color:#2b3f5c;">1</span>
<span style="left:9.4px;top:212px;font-size:13.5px;line-height:13.5px;transform:scaleX(0.958);transform-origin:0 0;color:#2b3f5c;">2</span>
<span style="left:9.4px;top:232px;font-size:13.5px;line-height:13.5px;transform:scaleX(0.958);transform-origin:0 0;color:#2b3f5c;">3</span>
<span style="left:9.4px;top:252px;font-size:13.5px;line-height:13.5px;transform:scaleX(0.958);transform-origin:0 0;color:#2b3f5c;">4</span>
<span style="left:9.4px;top:272px;font-size:13.5px;line-height:13.5px;transform:scaleX(0.958);transform-origin:0 0;color:#2b3f5c;">5</span>
<span style="left:9.4px;top:292px;font-size:13.5px;line-height:13.5px;transform:scaleX(0.958);transform-origin:0 0;color:#2b3f5c;">6</span>
<span style="left:9.4px;top:312px;font-size:13.5px;line-height:13.5px;transform:scaleX(0.958);transform-origin:0 0;color:#2b3f5c;">7</span>
<span style="left:9.4px;top:332px;font-size:13.5px;line-height:13.5px;transform:scaleX(0.958);transform-origin:0 0;color:#2b3f5c;">8</span>
<span style="left:9.4px;top:352px;font-size:13.5px;line-height:13.5px;transform:scaleX(0.958);transform-origin:0 0;color:#2b3f5c;">9</span>
<span style="left:5.9px;top:372px;font-size:13.5px;line-height:13.5px;transform:scaleX(0.945);transform-origin:0 0;color:#2b3f5c;">10</span>
<span style="left:5.9px;top:392px;font-size:13.5px;line-height:13.5px;transform:scaleX(1.013);transform-origin:0 0;color:#2b3f5c;">11</span>
<span style="left:5.9px;top:412px;font-size:13.5px;line-height:13.5px;transform:scaleX(0.945);transform-origin:0 0;color:#2b3f5c;">12</span>
<span style="left:5.9px;top:432px;font-size:13.5px;line-height:13.5px;transform:scaleX(0.945);transform-origin:0 0;color:#2b3f5c;">13</span>
<span style="left:5.9px;top:452px;font-size:13.5px;line-height:13.5px;transform:scaleX(0.945);transform-origin:0 0;color:#2b3f5c;">14</span>
<span style="left:5.9px;top:472px;font-size:13.5px;line-height:13.5px;transform:scaleX(0.945);transform-origin:0 0;color:#2b3f5c;">15</span>
<span style="left:5.9px;top:492px;font-size:13.5px;line-height:13.5px;transform:scaleX(0.945);transform-origin:0 0;color:#2b3f5c;">16</span>
<span style="left:5.9px;top:512px;font-size:13.5px;line-height:13.5px;transform:scaleX(0.945);transform-origin:0 0;color:#2b3f5c;">17</span>
<span style="left:5.9px;top:532px;font-size:13.5px;line-height:13.5px;transform:scaleX(0.945);transform-origin:0 0;color:#2b3f5c;">18</span>
<span style="left:5.9px;top:552px;font-size:13.5px;line-height:13.5px;transform:scaleX(0.945);transform-origin:0 0;color:#2b3f5c;">19</span>
<span style="left:5.9px;top:572px;font-size:13.5px;line-height:13.5px;transform:scaleX(0.945);transform-origin:0 0;color:#2b3f5c;">20</span>
<span style="left:5.9px;top:592px;font-size:13.5px;line-height:13.5px;transform:scaleX(0.945);transform-origin:0 0;color:#2b3f5c;">21</span>
<span style="left:5.9px;top:612px;font-size:13.5px;line-height:13.5px;transform:scaleX(0.945);transform-origin:0 0;color:#2b3f5c;">22</span>
<span style="left:5.9px;top:632px;font-size:13.5px;line-height:13.5px;transform:scaleX(0.945);transform-origin:0 0;color:#2b3f5c;">23</span>
<span style="left:5.9px;top:652px;font-size:13.5px;line-height:13.5px;transform:scaleX(0.945);transform-origin:0 0;color:#2b3f5c;">24</span>
<span style="left:5.9px;top:672px;font-size:13.5px;line-height:13.5px;transform:scaleX(0.945);transform-origin:0 0;color:#2b3f5c;">25</span>
<span style="left:5.9px;top:692px;font-size:13.5px;line-height:13.5px;transform:scaleX(0.945);transform-origin:0 0;color:#2b3f5c;">26</span>
<span style="left:407.8px;top:232px;font-size:13.2px;line-height:13.2px;transform:scaleX(1.007);transform-origin:0 0;color:#000;">Pressurized Water Reactor - PWR</span>
<span style="left:407.8px;top:252px;font-size:13.2px;line-height:13.2px;transform:scaleX(1.015);transform-origin:0 0;color:#000;">Boiling Water Reactor - BWR</span>
<span style="left:407.8px;top:272px;font-size:13.2px;line-height:13.2px;transform:scaleX(1.005);transform-origin:0 0;color:#000;">High Temperature Gas-Cooled Reactor - HTGR</span>
<span style="left:407.8px;top:292px;font-size:13.2px;line-height:13.2px;transform:scaleX(0.988);transform-origin:0 0;color:#000;">Research Reactor</span>
<span style="left:407.8px;top:312px;font-size:13.2px;line-height:13.2px;transform:scaleX(1.017);transform-origin:0 0;color:#000;">Test Reactor</span>
<span style="left:407.8px;top:392px;font-size:13.2px;line-height:13.2px;transform:scaleX(1.023);transform-origin:0 0;color:#000;">Operating License</span>
<span style="left:407.8px;top:412px;font-size:13.2px;line-height:13.2px;color:#000;">Possession Only License</span>
<span style="left:407.8px;top:492px;font-size:13.2px;line-height:13.2px;transform:scaleX(0.930);transform-origin:0 0;color:#000;">Yes</span>
<span style="left:407.8px;top:512px;font-size:13.2px;line-height:13.2px;transform:scaleX(1.008);transform-origin:0 0;color:#000;">No</span>
<span style="left:407.8px;top:532px;font-size:13.2px;line-height:13.2px;transform:scaleX(1.084);transform-origin:0 0;color:#000;">Undetermined</span>
<span style="left:407.8px;top:612px;font-size:13.2px;line-height:13.2px;transform:scaleX(1.063);transform-origin:0 0;color:#000;">Completed</span>
<span style="left:407.8px;top:632px;font-size:13.2px;line-height:13.2px;transform:scaleX(0.979);transform-origin:0 0;color:#000;">In Process</span>
<span style="left:407.8px;top:652px;font-size:13.2px;line-height:13.2px;transform:scaleX(1.027);transform-origin:0 0;color:#000;">Planned</span>
<span style="left:407.8px;top:672px;font-size:13.2px;line-height:13.2px;transform:scaleX(1.084);transform-origin:0 0;color:#000;">Undetermined</span>
<span style="left:93.6px;top:243px;font-size:11px;line-height:11px;transform:scaleX(0.970);transform-origin:0 0;color:#111;">Pressurized Water Reactor - PWR</span>
<span style="left:93.6px;top:256px;font-size:11px;line-height:11px;transform:scaleX(0.965);transform-origin:0 0;color:#111;">Boiling Water Reactor - BWR</span>
<span style="left:93.6px;top:269px;font-size:11px;line-height:11px;transform:scaleX(0.959);transform-origin:0 0;color:#111;">High Temperature Gas-Cooled Reactor - HTGR</span>
<span style="left:93.6px;top:282px;font-size:11px;line-height:11px;transform:scaleX(0.970);transform-origin:0 0;color:#111;">Research Reactor</span>
<span style="left:93.6px;top:295px;font-size:11px;line-height:11px;transform:scaleX(1.004);transform-origin:0 0;color:#111;">Test Reactor</span>
<div id="sheetbar"></div><div id="status"></div><div id="taskbar"></div>
<div style="left:0px;top:704px;width:58px;height:14px;background:linear-gradient(#e4edf9,#d3e1f4 50%,#c2d5ef)"></div>
<svg style="left:5px;top:707px" width="48" height="7" viewBox="0 0 48 7"><path d="M0 0h1.600v7H0zM6.500 0v7L2.500 3.500z M19.500 0v7L15.500 3.500z M28 0v7l4-3.500z M41 0v7l4-3.500zM45.500 0h1.600v7h-1.600z" fill="#1c4a9c"/></svg>
<svg style="left:56px;top:703px" width="214" height="16" viewBox="0 0 214 16">
<defs><linearGradient id="stg" x1="0" y1="0" x2="0" y2="1"><stop offset="0" stop-color="#e6effb"/><stop offset="1" stop-color="#bdd2ee"/></linearGradient></defs>
<path d="M60 15.500L69.500 1H211L200 15.500z" fill="url(#stg)"/>
<path d="M2.500 0v13c0 1.500 1 2 2 2H59L69.500 0z" fill="#fff"/>
<path d="M2.500 0v13c0 1.500 1 2 2 2H59L69.500 .500" fill="none" stroke="#6f8fc0"/>
<path d="M59 15.500h56L125.500 .500M115 15.500h56L181.500 .500M171 15.500h29.500L211.500 .500" fill="none" stroke="#6f8fc0"/>
<path d="M70.500 1.500L61.500 14M126.500 1.500L117.500 14M182.500 1.500L173.500 14" stroke="#f8fbfe" stroke-width="1" fill="none"/>
</svg>
<span style="left:68.0px;top:706px;font-size:11.5px;line-height:11.5px;transform:scaleX(1.034);transform-origin:0 0;color:#15428b;font-weight:bold;">Sheet1</span>
<span style="left:126.0px;top:706px;font-size:11.5px;line-height:11.5px;transform:scaleX(0.946);transform-origin:0 0;color:#15428b;">Sheet2</span>
<span style="left:182.0px;top:706px;font-size:11.5px;line-height:11.5px;transform:scaleX(0.946);transform-origin:0 0;color:#15428b;">Sheet3</span>
<svg style="left:237px;top:704px" width="16" height="14" viewBox="0 0 16 14"><path d="M4.500 3.500h10v7l-2 2h-8z" fill="#fdfdfe" stroke="#5f7aa8"/><path d="M12.500 12.500v-2h2" fill="none" stroke="#5f7aa8"/><path d="M3 0v6M0 3h6M1 1l4 4M5 1l-4 4" stroke="#e8a41c" stroke-width="1.100"/></svg>
<div style="left:608px;top:704px;width:397px;height:14px;background:linear-gradient(#86a5d5,#7b9ccc)"></div>
<div style="left:604px;top:705px;width:4px;height:12px;background:#fbfdff"></div>
<div style="left:605.5px;top:708px;width:1px;height:7px;background:#4d6aa0"></div>
<svg style="left:614px;top:706px" width="6" height="10" viewBox="0 0 6 10"><path d="M5.500 0v10L0 5z" fill="#4d6185"/></svg>
<div style="left:625px;top:705px;width:267px;height:13px;border:1px solid #51709f;border-radius:2px;background:linear-gradient(#f0f3f8 0,#e3e8f0 40%,#c5d0e2 80%,#bccae0)"></div>
<svg style="left:754px;top:708px" width="8" height="7" viewBox="0 0 8 7"><path d="M.500 0v7M2.500 0v7M4.500 0v7M6.500 0v7" stroke="#5f7aa8"/></svg>
<svg style="left:989px;top:706px" width="6" height="10" viewBox="0 0 6 10"><path d="M.500 0v10L6 5z" fill="#4d6185"/></svg>
<div style="left:1000px;top:705px;width:4px;height:12px;background:#fbfdff"></div>
<div style="left:1001.5px;top:708px;width:1px;height:7px;background:#4d6aa0"></div>
<div style="left:1005px;top:703px;width:15px;height:16px;background:#86a5d3"></div>
<div style="left:1020px;top:703px;width:4px;height:16px;background:#a9c2e6"></div>
<div style="left:779px;top:720px;width:245px;height:21px;background:linear-gradient(#c6daf5 0,#b6cef0 7px,#9dbce9 8px,#a2c0ea 15px,#b4cdf0 21px)"></div>
<span style="left:7.0px;top:724px;font-size:11.5px;line-height:11.5px;transform:scaleX(0.932);transform-origin:0 0;color:#15428b;">Ready</span>
<div style="left:46px;top:721px;width:2px;height:19px;border-left:1px solid #9cb7dd;border-right:1px solid #e6effb"></div>
<div style="left:80px;top:721px;width:2px;height:19px;border-left:1px solid #9cb7dd;border-right:1px solid #e6effb"></div>
<div style="left:778px;top:721px;width:2px;height:19px;border-left:1px solid #9cb7dd;border-right:1px solid #e6effb"></div>
<svg style="left:56px;top:722px" width="15" height="14" viewBox="0 0 15 14"><rect x="1.500" y="2.500" width="13" height="11" fill="#fdfdfe" stroke="#7f8aa0"/><rect x="2" y="3" width="12" height="2.500" fill="#c9d4e6"/><path d="M3.500 7.500h3M8.500 7.500h4M3.500 9.500h3M8.500 9.500h4M3.500 11.500h3M8.500 11.500h4" stroke="#4f7fd8"/><circle cx="3" cy="3" r="2.600" fill="#e0432a"/><circle cx="2.300" cy="2.300" r=".9" fill="#f6a090"/></svg>
<div style="left:784px;top:721px;width:57px;height:17px;border:1px solid #9cb7dd;border-radius:2px;background:linear-gradient(#e4edf9,#c9daf1)"></div>
<div style="left:784px;top:721px;width:20px;height:17px;border:1px solid #d9a354;border-radius:2px 0 0 2px;background:linear-gradient(#fde3a6,#fbc767 50%,#f9b94a 55%,#fdd98a)"></div>
<div style="left:821px;top:722px;width:1px;height:15px;background:#9cb7dd"></div>
<svg style="left:788px;top:724px" width="12" height="11" viewBox="0 0 12 11"><rect x=".500" y=".500" width="11" height="10" fill="#fff" stroke="#5a5f6c"/><path d="M.500 3.500h11M.500 6.500h11M4.500 .500v10M8.500 .500v10" stroke="#5a5f6c" stroke-width=".9"/></svg>
<svg style="left:806px;top:724px" width="12" height="11" viewBox="0 0 12 11"><rect x=".500" y=".500" width="11" height="10" fill="#c9ced8" stroke="#5a5f6c"/><rect x="3.500" y="2.500" width="5" height="7" fill="#fff" stroke="#5a5f6c" stroke-width=".8"/><path d="M5 4.500h2M5 6.500h2" stroke="#8a8f9c" stroke-width=".8"/></svg>
<svg style="left:825px;top:724px" width="12" height="11" viewBox="0 0 12 11"><rect x=".500" y=".500" width="11" height="10" fill="#fff" stroke="#5a5f6c"/><path d="M.500 6.500h11M6 .500v6" stroke="#5a5f6c" stroke-width="1.600"/><rect x="1" y="7" width="10" height="3" fill="#c9ced8"/></svg>
<span style="left:849.0px;top:724px;font-size:11.5px;line-height:11.5px;transform:scaleX(0.918);transform-origin:0 0;color:#15428b;">100%</span>
<svg style="left:885px;top:721px" width="16" height="16" viewBox="0 0 16 16"><defs><linearGradient id="zb893" x1="0" y1="0" x2="0" y2="1"><stop offset="0" stop-color="#f4f8fd"/><stop offset=".5" stop-color="#d5e2f4"/><stop offset=".5" stop-color="#b9cde9"/><stop offset="1" stop-color="#dbe7f6"/></linearGradient></defs><circle cx="8" cy="8" r="7.300" fill="url(#zb893)" stroke="#5f7fb0" stroke-width="1"/><circle cx="8" cy="8" r="6.300" fill="none" stroke="#f4f8fd" stroke-width=".8"/><path d="M4 8h8" stroke="#3f5378" stroke-width="2"/></svg>
<svg style="left:1003px;top:721px" width="16" height="16" viewBox="0 0 16 16"><defs><linearGradient id="zb1011" x1="0" y1="0" x2="0" y2="1"><stop offset="0" stop-color="#f4f8fd"/><stop offset=".5" stop-color="#d5e2f4"/><stop offset=".5" stop-color="#b9cde9"/><stop offset="1" stop-color="#dbe7f6"/></linearGradient></defs><circle cx="8" cy="8" r="7.300" fill="url(#zb1011)" stroke="#5f7fb0" stroke-width="1"/><circle cx="8" cy="8" r="6.300" fill="none" stroke="#f4f8fd" stroke-width=".8"/><path d="M4 8h8" stroke="#3f5378" stroke-width="2"/><path d="M8 4v8" stroke="#3f5378" stroke-width="2"/></svg>
<div style="left:903px;top:728px;width:98px;height:2px;border-top:1px solid #6f8fc0;border-bottom:1px solid #e6effb"></div>
<svg style="left:946px;top:721px" width="11" height="15" viewBox="0 0 11 15"><path d="M1.500 .500h8c.6 0 1 .4 1 1v8L5.500 14.500 .500 9.500v-8c0-.6.400-1 1-1z" fill="#e9eff8" stroke="#51709f"/><path d="M5.500 3v8" stroke="#7f9cc8"/></svg>
<div class="tb" style="left:2px;top:744px;width:53px;height:22px;"></div>
<svg style="left:5px;top:747px" width="16" height="15" viewBox="0 0 16 15"><path d="M1 2.500c2-1.200 4-1.200 6 0l-1 5c-2-1.200-4-1.200-6 0z" fill="#e8432a"/><path d="M8.500 2.800c2 1.200 4 1.200 6.500 0l-1 5c-2.500 1.200-4.500 1.200-6.500 0z" fill="#4aa83a"/><path d="M0 8.800c2-1.200 4-1.200 6 0l-1 5c-2-1.200-4-1.200-6 0z" fill="#3a6fd8" transform="translate(-.3 0)"/><path d="M7 9c2 1.200 4 1.200 6.500 0l-1 5c-2.500 1.200-4.500 1.200-6.500 0z" fill="#f4c21c"/></svg>
<span style="left:22.0px;top:750px;font-size:11.5px;line-height:11.5px;transform:scaleX(1.088);transform-origin:0 0;color:#000;font-weight:bold;">Start</span>
<div class="tgrip" style="left:60px;top:746px;width:3px;height:19px;"></div>
<div class="tgrip" style="left:142px;top:746px;width:3px;height:19px;"></div>
<svg style="left:70px;top:746px" width="17" height="17" viewBox="0 0 17 17"><rect x="1" y="1" width="11.500" height="13" rx="2" fill="#fdf4e4" stroke="#e8a050" stroke-width="1.200"/><circle cx="10" cy="10.500" r="6" fill="#fbe6b0" stroke="#e0b060" stroke-width=".8"/><circle cx="9.500" cy="9.500" r="4" fill="#fdf3d4" opacity=".7"/><path d="M7 9l3 2.800 3-2.800" stroke="#b8862a" stroke-width="1.500" fill="none"/></svg>
<svg style="left:94px;top:746px" width="17" height="17" viewBox="0 0 17 17"><circle cx="8.500" cy="8.500" r="7.800" fill="#e8791c"/><circle cx="8" cy="7.500" r="5" fill="#2a4fb0"/><path d="M2 5c2-1 3 0 4.500 1.500 1.500 1 3 .5 3.500 2 .5 2-1.500 3.500-3.500 3.500-3 0-5-3-4.500-7z" fill="#f4a21c"/><path d="M1 7c0 5 3.500 9 8 9 4 0 7-3 7.500-7-1 3-3.500 4.500-6 4.500-4 0-7-2.500-9.500-6.500z" fill="#d8521c"/></svg>
<svg style="left:117px;top:746px" width="17" height="17" viewBox="0 0 17 17"><rect x="1.500" y="2.500" width="13" height="13" rx="2.500" fill="#3f8fe8" stroke="#1f5fb8"/><rect x="4" y="5" width="8" height="8" fill="#e8f2fd"/><path d="M10.500 6.500c-2.500-1-4.500 0-4.500 2.500s2 3.500 4.500 2.500M6 9h4" stroke="#1f5fb8" stroke-width="1.200" fill="none"/><path d="M12 1l1 2 2.500.500-2 1.500.500 2.500-2-1.500" fill="#f4c21c" stroke="#c98a1a" stroke-width=".5"/></svg>
<div class="tb" style="left:150px;top:744px;width:129px;height:22px;"></div>
<svg style="left:154px;top:746px" width="17" height="17" viewBox="0 0 17 17"><rect x="1" y="1" width="11.500" height="13" rx="2" fill="#fdf4e4" stroke="#e8a050" stroke-width="1.200"/><circle cx="10" cy="10.500" r="6" fill="#fbe6b0" stroke="#e0b060" stroke-width=".8"/><circle cx="9.500" cy="9.500" r="4" fill="#fdf3d4" opacity=".7"/><path d="M7 9l3 2.800 3-2.800" stroke="#b8862a" stroke-width="1.500" fill="none"/></svg>
<span style="left:174.0px;top:750px;font-size:11.5px;line-height:11.5px;transform:scaleX(1.023);transform-origin:0 0;color:#000;">Inbox - Microsoft ...</span>
<div class="tb" style="left:282px;top:744px;width:128px;height:22px;"></div>
<svg style="left:286px;top:747px" width="17" height="15" viewBox="0 0 17 15"><path d="M.500 2.500c0-1 .5-1.500 1.500-1.500h4l1.500 2h7c1 0 1.500.5 1.500 1.500v8c0 1-.5 1.500-1.500 1.500h-12.500c-1 0-1.500-.5-1.500-1.500z" fill="#f4d468" stroke="#b8922a"/><path d="M1.500 5.500h14" stroke="#fbeeb0"/></svg>
<span style="left:306.0px;top:750px;font-size:11.5px;line-height:11.5px;transform:scaleX(0.963);transform-origin:0 0;color:#000;">C:\Documents and...</span>
<div class="tb" style="left:414px;top:744px;width:128px;height:22px;"></div>
<svg style="left:418px;top:746px" width="17" height="17" viewBox="0 0 17 17"><path d="M5.500 1.500h8l3 3v11h-11z" fill="#fdfdfe" stroke="#6f86b0"/><path d="M8 6.500h6M8 8.500h6M8 10.500h6M8 12.500h6" stroke="#9ab0d8"/><rect x=".500" y="3.500" width="10" height="9" fill="#2f5fc0" stroke="#1f3f90"/><text x="5.500" y="11" font-family="Liberation Sans,sans-serif" font-weight="bold" font-size="8" text-anchor="middle" fill="#fff">W</text></svg>
<span style="left:438.0px;top:750px;font-size:11.5px;line-height:11.5px;transform:scaleX(0.943);transform-origin:0 0;color:#000;">GC859 Survey jus...</span>
<div class="tb" style="left:546px;top:744px;width:129px;height:22px;"></div>
<svg style="left:550px;top:746px" width="17" height="17" viewBox="0 0 17 17"><path d="M5.500 1.500h8l3 3v11h-11z" fill="#fdfdfe" stroke="#6f86b0"/><path d="M8 6.500h6M8 8.500h6M8 10.500h6M8 12.500h6" stroke="#9ab0d8"/><rect x=".500" y="3.500" width="10" height="9" fill="#2f5fc0" stroke="#1f3f90"/><text x="5.500" y="11" font-family="Liberation Sans,sans-serif" font-weight="bold" font-size="8" text-anchor="middle" fill="#fff">W</text></svg>
<span style="left:570.0px;top:750px;font-size:11.5px;line-height:11.5px;transform:scaleX(0.924);transform-origin:0 0;color:#000;">GTCC Screenshots...</span>
<div class="tb dn" style="left:679px;top:744px;width:129px;height:22px;"></div>
<svg style="left:684px;top:747px" width="17" height="17" viewBox="0 0 17 17"><path d="M4.500 .500h9l3 3v10h-12z" fill="#fdfdfe" stroke="#5a9a4a"/><rect x=".500" y="4.500" width="13" height="12" fill="#eaf4e6" stroke="#3a8a2a"/><path d="M3.500 7l6 7M9.500 7l-6 7" stroke="#2a7a1a" stroke-width="2"/></svg>
<span style="left:704.0px;top:751px;font-size:11.5px;line-height:11.5px;transform:scaleX(1.009);transform-origin:0 0;color:#000;font-weight:bold;">Microsoft Excel -...</span>
<div style="left:816px;top:744px;width:206px;height:22px;border:1px solid;border-color:#808080 #fff #fff #808080"></div>
<svg style="left:820px;top:746px" width="17" height="17" viewBox="0 0 17 17"><rect x="1" y="1" width="11.500" height="13" rx="2" fill="#fdf4e4" stroke="#e8a050" stroke-width="1.200"/><circle cx="10" cy="10.500" r="6" fill="#fbe6b0" stroke="#e0b060" stroke-width=".8"/><circle cx="9.500" cy="9.500" r="4" fill="#fdf3d4" opacity=".7"/><path d="M7 9l3 2.800 3-2.800" stroke="#b8862a" stroke-width="1.500" fill="none"/></svg>
<svg style="left:838px;top:746px" width="17" height="17" viewBox="0 0 17 17"><rect x="1" y="1" width="15" height="15" rx="1" fill="#fdfeff" stroke="#1f6fc8" stroke-width="1.400"/><path d="M1.500 12v3.500H8z" fill="#c9dcf4"/><circle cx="5.500" cy="5" r="2.200" fill="none" stroke="#2a6fd0" stroke-width="1.500"/><path d="M7 6.500l6 6.500M10.500 10.500l1.500-1.500M12.500 12.500l1.500-1.500" stroke="#2a6fd0" stroke-width="1.500"/></svg>
<svg style="left:855px;top:746px" width="17" height="17" viewBox="0 0 17 17"><circle cx="8.500" cy="8.500" r="8" fill="#1f2f62"/><ellipse cx="8.500" cy="5" rx="6.500" ry="3.500" fill="#8f9fc8" opacity=".55"/><text x="8.500" y="11" font-family="Liberation Sans,sans-serif" font-weight="bold" font-size="6" text-anchor="middle" fill="#fff">DCP</text></svg>
<svg style="left:873px;top:747px" width="17" height="15" viewBox="0 0 17 15"><rect x="0" y="0" width="17" height="15" fill="#e0201c"/><text x="8.500" y="11.500" font-family="Liberation Sans,sans-serif" font-weight="bold" font-style="italic" font-size="10" text-anchor="middle" fill="#fff">ATI</text></svg>
<svg style="left:891px;top:746px" width="17" height="17" viewBox="0 0 17 17"><circle cx="8.500" cy="8.500" r="8.300" fill="#111"/><circle cx="8.500" cy="8.500" r="7" fill="#f4e01c"/><path d="M8.500 8.500L5 2.500a7 7 0 0 1 7 0z M8.500 8.500l7 0a7 7 0 0 1-3.500 6z M8.500 8.500L5 14.500a7 7 0 0 1-3.500-6z" fill="#111"/><circle cx="8.500" cy="8.500" r="1.600" fill="#f4e01c"/><circle cx="8.500" cy="8.500" r="1" fill="#111"/></svg>
<svg style="left:909px;top:746px" width="17" height="17" viewBox="0 0 17 17"><circle cx="10.500" cy="6" r="5" fill="#dfeefc" stroke="#8fb0d8" stroke-width="1.300"/><path d="M7 9.500l-5.500 5.500" stroke="#2f5fc0" stroke-width="2.600" stroke-linecap="round"/></svg>
<svg style="left:927px;top:746px" width="17" height="17" viewBox="0 0 17 17"><path d="M2.500 1h4v9.500l-2 2-2-2zM8 1h4v9.500l-2 2-2-2z" fill="#f4d468" stroke="#b8922a" stroke-width=".9"/><circle cx="11.500" cy="12.500" r="3.300" fill="#2aa83a" stroke="#176a22"/></svg>
<svg style="left:945px;top:746px" width="17" height="17" viewBox="0 0 17 17"><circle cx="7" cy="8" r="6" fill="#9a9ca4" stroke="#5a5c66"/><circle cx="7" cy="8" r="3" fill="#d4d6dc" stroke="#6a6c76"/><path d="M12 13c1.500-1 2.500-2.500 2.500-4.500M13.500 15c2-1.500 3-3.500 3-6" stroke="#8f86d8" stroke-width="1.100" fill="none"/></svg>
<span style="left:970.5px;top:750px;font-size:11.5px;line-height:11.5px;transform:scaleX(0.948);transform-origin:0 0;color:#000;">9:38 AM</span>

</body></html>
